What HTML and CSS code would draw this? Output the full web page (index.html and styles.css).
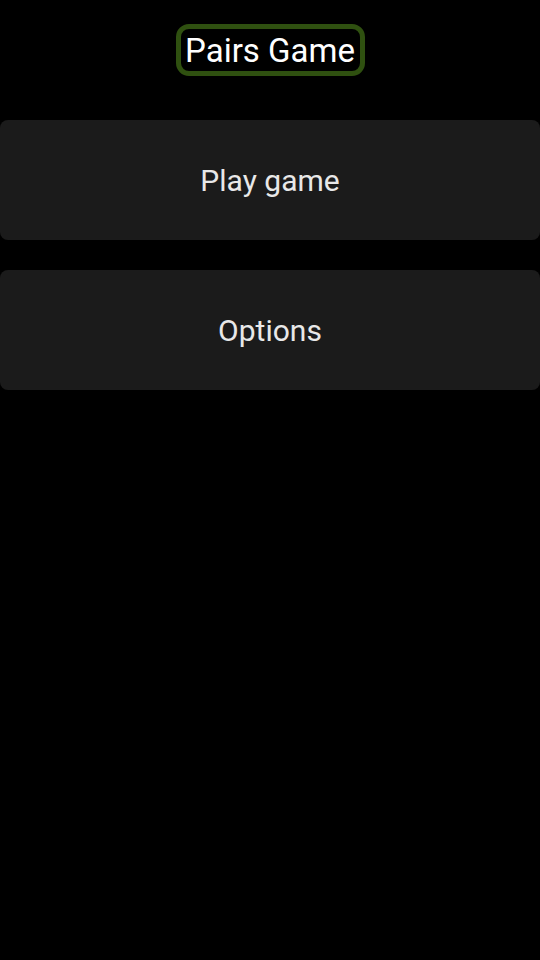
FILE: index.html
```html
<!DOCTYPE html>
<html lang="en">
<head>
    <meta charset="UTF-8">
    <meta name="viewport" content="width=device-width, initial-scale=1.0">
    <title>Pairs Game</title>
    <link rel="stylesheet" href="styles.css">
</head>
<body>

<div class="menu">
    <h1 class="title">Pairs Game</h1>

    <button class="menu-button" type="button">Play game</button>
    <button class="menu-button" type="button">Options</button>
</div>

</body>
</html>
```

FILE: styles.css
```css
body {
    font-family: Roboto, "Noto Sans", sans-serif;
    margin: 0;
    padding: 0;
    background-color: #000;
    color: #fff;
}
.menu {
    display: flex;
    flex-direction: column;
    align-items: center;
    padding-top: 24px;
}
.title {
    margin: 0 0 44px 0;
    box-sizing: border-box;
    width: 189px;
    height: 52px;
    border: 5px solid #2f5010;
    border-radius: 13px;
    font-size: 33px;
    font-weight: normal;
    line-height: 43px;
    text-align: center;
    white-space: nowrap;
}
.menu-button {
    width: 100%;
    height: 120px;
    margin-bottom: 30px;
    border: none;
    border-radius: 8px;
    background-color: #1b1b1b;
    color: #e8e8e8;
    font-family: inherit;
    font-size: 30px;
}
```
